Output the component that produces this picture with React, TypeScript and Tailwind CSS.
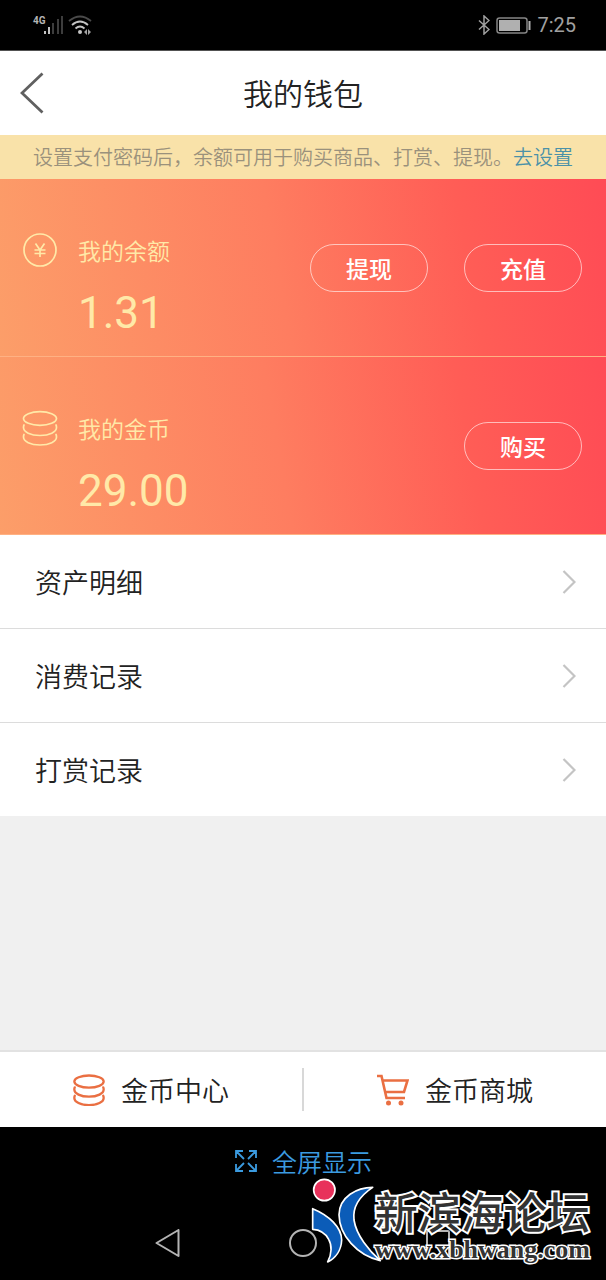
import { useState } from "react";
import type { ReactNode } from "react";

type WalletCardProps = {
  icon: ReactNode;
  label: string;
  amount: string;
  actions: string[];
};

const records = ["资产明细", "消费记录", "打赏记录"];

function CoinsIcon({ className, strokeWidth }: { className: string; strokeWidth: number }) {
  return (
    <svg
      viewBox="0 0 36 36"
      className={className}
      fill="none"
      stroke="currentColor"
      strokeWidth={strokeWidth}
      strokeLinecap="round"
      aria-hidden="true"
    >
      <ellipse cx="18" cy="8.5" rx="16.5" ry="6.8" />
      <path d="M2 15c-.4.800-.5 1.500-.5 2.500 0 4.500 7 8 16.500 8s16.500-3.500 16.500-8c0-1-.1-1.700-.5-2.500" />
      <path d="M2 24.500c-.4.800-.5 1.500-.5 2.500 0 4.500 7 8 16.500 8s16.500-3.500 16.500-8c0-1-.1-1.700-.5-2.500" />
    </svg>
  );
}

function YuanIcon() {
  return (
    <svg
      viewBox="0 0 36 36"
      className="size-9"
      fill="none"
      stroke="currentColor"
      strokeWidth="1.7"
      aria-hidden="true"
    >
      <circle cx="18" cy="18" r="16" />
      <path d="M13.500 11.500l4.500 6.500 4.500-6.500M18 18v7M12.500 18h11M12.500 21.500h11" />
    </svg>
  );
}

function StatusBar() {
  return (
    <div className="flex h-[51px] items-center justify-between border-b border-neutral-600 bg-black pr-[30px] pl-8 text-neutral-400">
      <svg viewBox="0 0 60 22" className="h-[22px] w-[60px]" aria-label="4G">
        <text
          x="1"
          y="10"
          fontSize="10"
          fontWeight="700"
          fill="#b5b5b5"
          fontFamily="Roboto, sans-serif"
        >
          4G
        </text>
        <g fill="#c4c4c4">
          <rect x="12" y="17" width="2" height="3" />
          <rect x="16" y="13" width="2" height="7" />
        </g>
        <g fill="#3d3d3d">
          <rect x="20" y="9" width="2" height="11" />
          <rect x="25" y="5" width="2" height="15" />
          <rect x="29" y="2" width="2" height="18" />
        </g>
        <g fill="none" strokeWidth="1.800">
          <path d="M37 7q11-9 22 0" stroke="#4a4a4a" />
          <path d="M40 11q8-7 16 0" stroke="#c4c4c4" />
          <path d="M43.500 14.500q4.500-4 9 0" stroke="#c4c4c4" />
        </g>
        <circle cx="48" cy="18" r="2" fill="#c4c4c4" />
        <path d="M52 18l3-3v6zM59 18l-3-3v6z" fill="#a3a3a3" />
      </svg>
      <div className="flex items-center gap-1.5">
        <svg
          viewBox="0 0 12 20"
          className="h-5 w-3"
          fill="none"
          stroke="currentColor"
          strokeWidth="1.5"
          aria-hidden="true"
        >
          <path d="M1 5.500l10 9-5 4.500V1l5 4.500-10 9" />
        </svg>
        <svg viewBox="0 0 35 17" className="h-[17px] w-[35px]" aria-hidden="true">
          <rect x="1" y="1" width="30" height="15" rx="2.500" fill="none" stroke="#858585" strokeWidth="1.500" />
          <rect x="3" y="3" width="21" height="11" fill="#b0b0b0" />
          <rect x="32.500" y="4" width="2" height="9" fill="#b0b0b0" />
        </svg>
        <span className="font-[Roboto,sans-serif] text-xl">7:25</span>
      </div>
    </div>
  );
}

function WalletCard({ icon, label, amount, actions }: WalletCardProps) {
  return (
    <section className="flex items-start border-b border-[#ffb183] bg-linear-[80deg,#fc9e69_0%,#fe7d60_46%,#ff5d56_76%,#ff4b55_100%] pt-[53px] pr-6 pb-4 pl-[22px] text-[#ffe9a8]">
      {icon}
      <div className="ml-5 flex-1">
        <h2 className="text-[23px] leading-9 font-[350]">{label}</h2>
        <p className="mt-[18px] font-[Roboto,sans-serif] text-[44px] leading-[54px]">{amount}</p>
      </div>
      <div className="mt-3 flex gap-9">
        {actions.map((action) => (
          <button
            key={action}
            type="button"
            className="h-12 w-[118px] rounded-full border border-white/60 text-[23px] font-medium text-white"
          >
            {action}
          </button>
        ))}
      </div>
    </section>
  );
}

function Watermark() {
  return (
    <div className="pointer-events-none absolute right-4 bottom-4 flex items-end">
      <svg
        viewBox="58 42 216 258"
        className="h-[86px] w-[72px]"
        fill="#0b5cb8"
        stroke="#fff"
        strokeWidth="5"
        strokeLinejoin="round"
        aria-hidden="true"
      >
        <circle cx="98" cy="78" r="32" fill="#e8315b" />
        <path d="M63 134C112 154 150 190 150 228C149 258 132 282 108 294C121 270 121 243 111 226C100 205 84 197 63 196Z" />
        <path d="M243 70C196 70 143 98 142 152C143 214 196 274 266 290C233 262 194 214 187 168C182 128 207 94 243 70Z" />
      </svg>
      <div className="-ml-2 flex flex-col text-[#333]">
        <span className="text-[43px] leading-[52px] font-medium [paint-order:stroke_fill] [-webkit-text-stroke:4px_white]">
          新滨海论坛
        </span>
        <span className="font-['Liberation_Serif',serif] text-[26px] leading-7 font-bold [paint-order:stroke_fill] [-webkit-text-stroke:3px_white]">
          www.xbhwang.com
        </span>
      </div>
    </div>
  );
}

export default function App() {
  const [fullscreen, setFullscreen] = useState(false);

  return (
    <div className="relative flex min-h-screen flex-col bg-[#f0f0f0] font-['Noto_Sans_CJK_SC',sans-serif] text-[#222]">
      <StatusBar />

      <header className="grid h-[84px] grid-cols-[64px_1fr_64px] items-center bg-white">
        <button type="button" aria-label="返回" className="pl-5">
          <svg
            viewBox="0 0 24 42"
            className="h-[42px] w-6"
            fill="none"
            stroke="#606060"
            strokeWidth="2.800"
            aria-hidden="true"
          >
            <path d="M22.500 1.500L2 21l20.500 19.500" />
          </svg>
        </button>
        <h1 className="pb-0.5 text-center text-3xl font-[350]">我的钱包</h1>
      </header>

      <p className="bg-[#f9e2a9] text-center text-xl leading-[44px] font-[350] whitespace-nowrap text-[#9a917c]">
        设置支付密码后，余额可用于购买商品、打赏、提现。
        <a href="#" className="text-[#4b91a8]">
          去设置
        </a>
      </p>

      <main>
        <WalletCard
          icon={<YuanIcon />}
          label="我的余额"
          amount="1.31"
          actions={["提现", "充值"]}
        />
        <WalletCard
          icon={<CoinsIcon className="size-9" strokeWidth={1.7} />}
          label="我的金币"
          amount="29.00"
          actions={["购买"]}
        />

        <nav className="divide-y divide-[#dcdcdc] bg-white">
          {records.map((record) => (
            <a
              key={record}
              href="#"
              className="flex items-center justify-between py-[26px] pr-[30px] pl-[35px] text-[27px] leading-[41px] font-[350]"
            >
              {record}
              <svg
                viewBox="0 0 14 24"
                className="h-6 w-3.5"
                fill="none"
                stroke="#c4c4c4"
                strokeWidth="2.200"
                aria-hidden="true"
              >
                <path d="M1.500 1l11 11-11 11" />
              </svg>
            </a>
          ))}
        </nav>
      </main>

      <nav className="mt-auto flex items-center border-t-2 border-[#e2e2e2] bg-white py-4 text-[27px] leading-[43px] font-[350]">
        <a href="#" className="flex flex-1 items-center justify-center gap-4 border-r-2 border-[#d8d8d8]">
          <CoinsIcon className="size-8 text-[#ea6f42]" strokeWidth={2.6} />
          金币中心
        </a>
        <a href="#" className="flex flex-1 items-center justify-center gap-4">
          <svg
            viewBox="0 0 32 32"
            className="size-8"
            fill="none"
            stroke="#ea6f42"
            strokeWidth="2.600"
            aria-hidden="true"
          >
            <path d="M0 2h4.500L9.500 24h18.500M5.500 6.500h25l-3.500 11.500H8.300" />
            <circle cx="11.500" cy="29" r="2.500" fill="#ea6f42" stroke="none" />
            <circle cx="24" cy="29" r="2.500" fill="#ea6f42" stroke="none" />
          </svg>
          金币商城
        </a>
      </nav>

      <footer className="h-[153px] bg-black pt-4">
        <button
          type="button"
          aria-pressed={fullscreen}
          onClick={() => setFullscreen(!fullscreen)}
          className="mx-auto flex items-center gap-3.5 text-[25px] leading-9 font-[350] text-[#3b9be0]"
        >
          <svg
            viewBox="0 0 24 24"
            className="size-6"
            fill="none"
            stroke="currentColor"
            strokeWidth="1.800"
            aria-hidden="true"
          >
            <path d="M9 2H2v7M15 2h7v7M9 22H2v-7M15 22h7v-7M2 2l8 8M22 2l-8 8M2 22l8-8M22 22l-8-8" />
          </svg>
          全屏显示
        </button>
        <div className="mt-[50px] flex justify-center gap-[107px] text-[#b4b4b4]">
          <button type="button" aria-label="后退">
            <svg viewBox="0 0 28 28" className="size-7" fill="none" stroke="currentColor" strokeWidth="2" strokeLinejoin="round">
              <path d="M24.500 1v26L2.500 14z" />
            </svg>
          </button>
          <button type="button" aria-label="主页">
            <svg viewBox="0 0 28 28" className="size-7" fill="none" stroke="currentColor" strokeWidth="2">
              <circle cx="14" cy="14" r="13" />
            </svg>
          </button>
          <button type="button" aria-label="最近任务">
            <svg viewBox="0 0 28 28" className="size-7" fill="none" stroke="currentColor" strokeWidth="2">
              <rect x="3" y="2" width="22" height="24" rx="1" />
            </svg>
          </button>
        </div>
      </footer>

      <Watermark />
    </div>
  );
}
